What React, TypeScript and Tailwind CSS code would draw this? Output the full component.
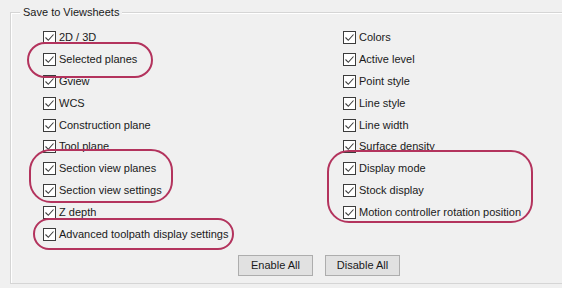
const LEFT = [
  '2D / 3D',
  'Selected planes',
  'Gview',
  'WCS',
  'Construction plane',
  'Tool plane',
  'Section view planes',
  'Section view settings',
  'Z depth',
  'Advanced toolpath display settings',
];

const RIGHT = [
  'Colors',
  'Active level',
  'Point style',
  'Line style',
  'Line width',
  'Surface density',
  'Display mode',
  'Stock display',
  'Motion controller rotation position',
];

const CheckBox = () => (
  <svg width="13" height="13" viewBox="0 0 13 13" className="shrink-0">
    <rect x="0.5" y="0.5" width="12" height="12" fill="#ffffff" stroke="#3c3c3c" />
    <path d="M2.5 6.5l2.8 2.8 5.2-5.8" fill="none" stroke="#3c3c3c" strokeWidth={1.1} />
  </svg>
);

function Row({ label }: { label: string }) {
  return (
    <div className="h-[21.8px] flex items-center gap-[3px]">
      <CheckBox />
      <span className="text-[11px] text-[#1a1a1a] leading-none whitespace-nowrap">{label}</span>
    </div>
  );
}

export default function App() {
  return (
    <div
      className="w-[562px] h-[288px] bg-[#f0f0f0] relative overflow-hidden"
      style={{ fontFamily: '"Liberation Sans", Arial, sans-serif' }}
    >
      {/* group box */}
      <div className="absolute left-[10px] top-[12px] right-[-4px] h-[272px] border border-[#d5d5d5] shadow-[inset_1px_1px_0_#ffffff]">
        <span className="absolute left-[9px] top-[-8px] px-[3px] bg-[#f0f0f0] text-[11px] text-[#1a1a1a] leading-[14px]">
          Save to Viewsheets
        </span>
      </div>

      <div className="relative pt-[27px] pl-[43px] flex">
        <div className="w-[300px] flex flex-col">
          {LEFT.map(l => <Row key={l} label={l} />)}
        </div>
        <div className="flex flex-col">
          {RIGHT.map(l => <Row key={l} label={l} />)}
        </div>
      </div>

      <div className="relative flex gap-[12px] pl-[238px] pt-[10px]">
        <button className="w-[75px] h-[21px] bg-[#e1e1e1] border border-[#adadad] text-[11px] text-[#1a1a1a] leading-none">
          Enable All
        </button>
        <button className="w-[75px] h-[21px] bg-[#e1e1e1] border border-[#adadad] text-[11px] text-[#1a1a1a] leading-none">
          Disable All
        </button>
      </div>

      {/* highlight marks */}
      <div className="absolute left-[27px] top-[42px] w-[126px] h-[36px] border-2 border-[#b3335d] rounded-[18px]" />
      <div className="absolute left-[29px] top-[149px] w-[144px] h-[54px] border-2 border-[#b3335d] rounded-[22px]" />
      <div className="absolute left-[33px] top-[218px] w-[201px] h-[32px] border-2 border-[#b3335d] rounded-[16px]" />
      <div className="absolute left-[327px] top-[150px] w-[206px] h-[73px] border-2 border-[#b3335d] rounded-[22px]" />
    </div>
  );
}
